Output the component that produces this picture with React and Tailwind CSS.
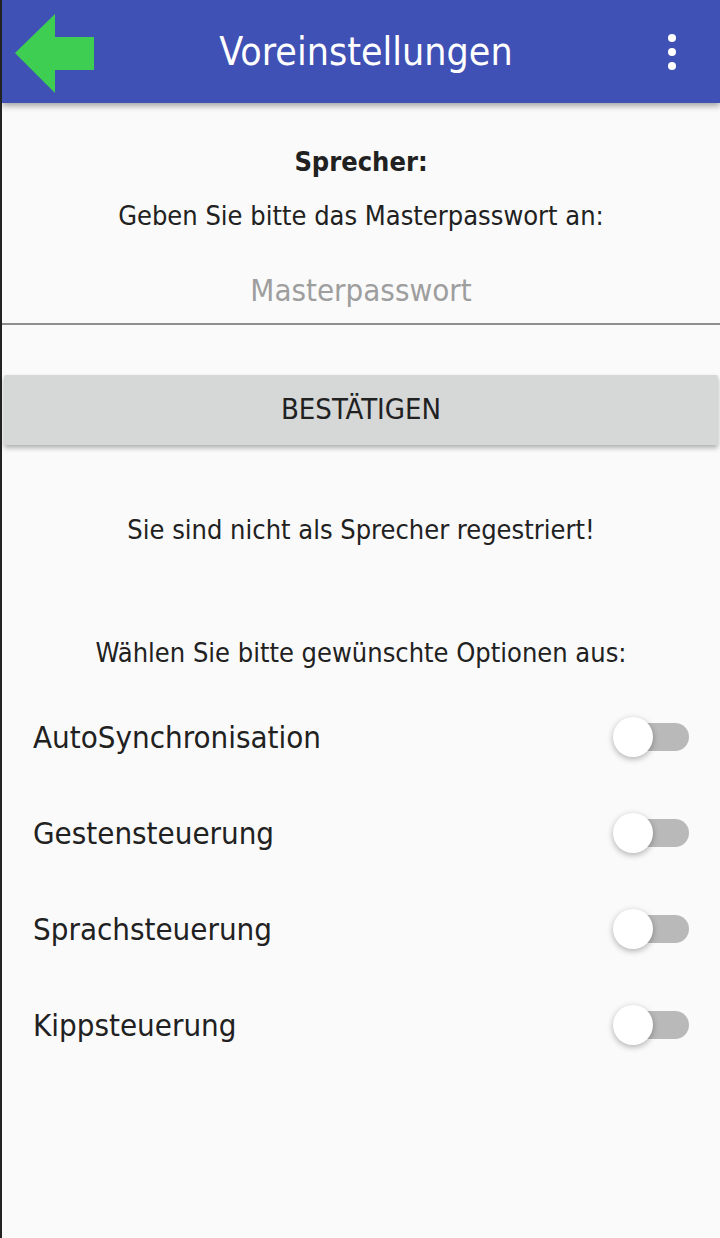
import React from "react";

function Toggle() {
  return (
    <div className="relative w-[76px] h-[40px] flex items-center">
      <div className="ml-[6px] w-[70px] h-[28px] rounded-full bg-[#b9b9b9]" />
      <div className="absolute left-0 top-0 w-[40px] h-[40px] rounded-full bg-white shadow-[0_2px_6px_rgba(0,0,0,0.3)]" />
    </div>
  );
}

export default function App() {
  const font = { fontFamily: '"DejaVu Sans Condensed", "DejaVu Sans", sans-serif' };
  const options = ["AutoSynchronisation", "Gestensteuerung", "Sprachsteuerung", "Kippsteuerung"];
  return (
    <div className="w-[720px] h-[1238px] bg-[#fafafa] text-[#212121] border-l-2 border-[#222] flex flex-col overflow-hidden" style={font}>
      <header className="h-[103px] bg-[#3f51b5] flex items-center relative shadow-[0_3px_6px_rgba(0,0,0,0.35)] z-10">
        <svg width="100" height="103" viewBox="0 0 100 103" className="shrink-0 ml-[-2px]">
          <path d="M15 53 L55 14 L55 37 L94 37 L94 70 L55 70 L55 93 Z" fill="#3ecf52" />
        </svg>
        <div className="flex-1 text-center text-white text-[39px] leading-none pl-[8px]">Voreinstellungen</div>
        <div className="w-[96px] flex flex-col items-center gap-[6px]">
          <span className="w-[8px] h-[8px] rounded-full bg-white" />
          <span className="w-[8px] h-[8px] rounded-full bg-white" />
          <span className="w-[8px] h-[8px] rounded-full bg-white" />
        </div>
      </header>

      <div className="flex flex-col">
        <div className="mt-[42px] text-center font-bold text-[27px] leading-[34px]">Sprecher:</div>
        <div className="mt-[20px] text-center text-[27px] leading-[34px]">Geben Sie bitte das Masterpasswort an:</div>
        <div className="mt-[38px] text-center text-[31px] leading-[38px] text-[#9e9e9e]">Masterpasswort</div>
        <div className="mt-[14px] h-[2px] bg-[#8f8f8f]" />
        <div className="mt-[50px] mx-[2px] h-[70px] bg-[#d6d7d7] flex items-center justify-center text-[29px] shadow-[0_3px_5px_rgba(0,0,0,0.3)] rounded-[2px]">
          BESTÄTIGEN
        </div>
        <div className="mt-[68px] text-center text-[27px] leading-[34px]">Sie sind nicht als Sprecher regestriert!</div>
        <div className="mt-[89px] text-center text-[27px] leading-[34px]">Wählen Sie bitte gewünschte Optionen aus:</div>
        <div className="mt-[47px] flex flex-col gap-[56px]">
          {options.map((o) => (
            <div key={o} className="flex items-center justify-between pl-[31px] pr-[31px] h-[40px]">
              <span className="text-[31px] leading-none">{o}</span>
              <Toggle />
            </div>
          ))}
        </div>
      </div>
    </div>
  );
}
